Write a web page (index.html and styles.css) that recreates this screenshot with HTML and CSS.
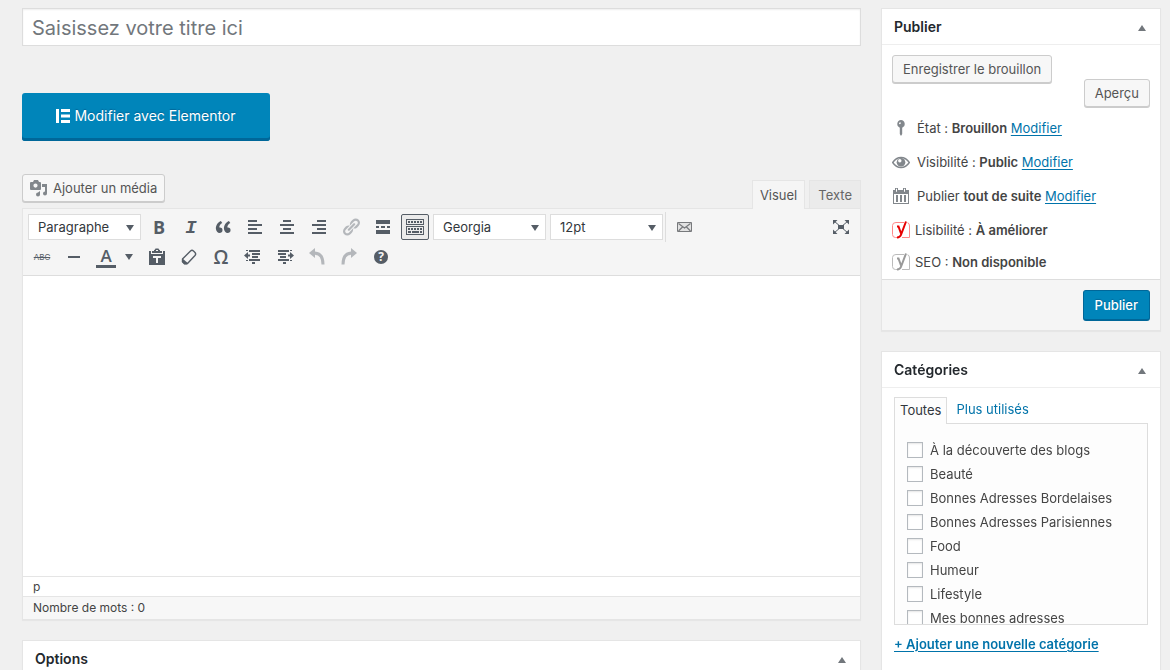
FILE: index.html
```html
<!DOCTYPE html>
<html lang="fr">
<head>
<meta charset="utf-8">
<meta name="viewport" content="width=device-width, initial-scale=1">
<title>Ajouter un article</title>
<link rel="stylesheet" href="styles.css">
</head>
<body>
<div class="layout">
  <main class="main">
    <input class="title-input" type="text" aria-label="Titre" placeholder="Saisissez votre titre ici">
    <button class="btn-elementor" type="button">
      <svg width="14" height="14" viewBox="0 0 14 14" aria-hidden="true"><path fill="#fff" d="M0 0h3v14H0zM5 0h9v3H5zM5 5.500h9v3H5zM5 11h9v3H5z"/></svg>
      Modifier avec Elementor
    </button>

    <div class="editor-tools">
      <button class="btn media-btn" type="button">
        <svg width="18" height="18" viewBox="0 0 18 18" aria-hidden="true"><path fill="#82878c" fill-rule="evenodd" d="M1 3h2l1-2h4l1 2h1q1 0 1 1v6q0 1-1 1H1q-1 0-1-1V4q0-1 1-1zm4.500 1.500a2.100 2.100 0 1 0 0 4.200a2.100 2.100 0 1 0 0-4.200z"/><path fill="#82878c" d="M12 5h5v9.500a2 2 0 1 1-2-2V8h-3zM10 12v3.500a2 2 0 1 1-2-2z"/></svg>
        Ajouter un média
      </button>
      <div class="editor-tabs">
        <button class="editor-tab active" type="button">Visuel</button>
        <button class="editor-tab" type="button">Texte</button>
      </div>
    </div>

    <section class="editor">
      <div class="toolbar">
        <div class="tool-row">
          <span class="select"><select aria-label="Format"><option>Paragraphe</option></select></span>
          <button class="tool glyph bold" type="button" aria-label="Gras">B</button>
          <button class="tool glyph italic" type="button" aria-label="Italique">I</button>
          <button class="tool" type="button" aria-label="Citation"><svg viewBox="0 0 20 20"><path d="M9.490 13.220c0-.74-.2-1.380-.61-1.900-.62-.78-1.830-.88-2.530-.72-.29-1.650 1.110-3.750 2.920-4.650L7.880 4c-2.730 1.300-5.420 4.280-4.960 8.050C3.210 14.430 4.590 16 6.540 16c.85 0 1.560-.25 2.120-.75s.83-1.180.83-2.030zm8.050 0c0-.74-.2-1.380-.61-1.900-.63-.78-1.830-.88-2.530-.72-.29-1.650 1.110-3.750 2.920-4.650L15.930 4c-2.730 1.300-5.410 4.280-4.950 8.050.29 2.380 1.660 3.950 3.610 3.950.85 0 1.560-.25 2.120-.75s.83-1.180.83-2.030z"/></svg></button>
          <button class="tool" type="button" aria-label="Aligner à gauche"><svg viewBox="0 0 20 20"><path d="M3 3h9v2H3zM3 7h14v2H3zM3 11h9v2H3zM3 15h14v2H3z"/></svg></button>
          <button class="tool" type="button" aria-label="Centrer"><svg viewBox="0 0 20 20"><path d="M6 3h8v2H6zM3 7h14v2H3zM6 11h8v2H6zM3 15h14v2H3z"/></svg></button>
          <button class="tool" type="button" aria-label="Aligner à droite"><svg viewBox="0 0 20 20"><path d="M8 3h9v2H8zM3 7h14v2H3zM8 11h9v2H8zM3 15h14v2H3z"/></svg></button>
          <button class="tool" type="button" aria-label="Lien" disabled><svg viewBox="0 0 20 20"><path d="M17.740 2.760c1.680 1.690 1.680 4.410 0 6.100l-1.530 1.520c-1.120 1.120-2.700 1.470-4.140 1.090l2.620-2.610.76-.77.76-.76c.84-.84.84-2.200 0-3.040-.84-.85-2.200-.85-3.040 0l-.77.76-3.380 3.380c-.37-1.440-.02-3.020 1.100-4.140l1.520-1.530c1.690-1.680 4.420-1.680 6.100 0zM8.590 13.430l5.340-5.340c.42-.42.42-1.100 0-1.520-.44-.43-1.130-.39-1.530 0l-5.330 5.340c-.42.42-.42 1.100 0 1.520.44.43 1.130.39 1.520 0zm-.76 2.290l4.140-4.150c.38 1.440.03 3.020-1.090 4.140l-1.520 1.530c-1.690 1.680-4.410 1.680-6.100 0-1.680-1.680-1.680-4.420 0-6.100l1.530-1.520c1.120-1.120 2.700-1.470 4.140-1.100l-4.140 4.150c-.85.84-.85 2.200 0 3.050.84.84 2.200.84 3.040 0z"/></svg></button>
          <button class="tool" type="button" aria-label="Lire la suite"><svg viewBox="0 0 20 20"><path d="M3 3h14v4H3zM3 9h3v2H3zM8 9h4v2H8zM14 9h3v2h-3zM3 13h14v4H3z"/></svg></button>
          <button class="tool pressed" type="button" aria-label="Plus d’outils" aria-pressed="true"><svg viewBox="0 0 20 20"><path fill-rule="evenodd" d="M1 2h18v6H1zm1 1v4h16V3zM1 9h18v9H1zm1 1v7h16v-7z"/><path d="M3 4h2v2H3zM6 4h2v2H6zM9 4h2v2H9zM12 4h2v2h-2zM15 4h2v2h-2zM3 11h2v2H3zM6 11h2v2H6zM9 11h2v2H9zM12 11h2v2h-2zM15 11h2v2h-2zM3 14h3v2H3zM7 14h7v2H7zM15 14h2v2h-2z"/></svg></button>
          <span class="select"><select aria-label="Police"><option>Georgia</option></select></span>
          <span class="select"><select aria-label="Taille"><option>12pt</option></select></span>
          <span class="separator"></span>
          <button class="tool" type="button" aria-label="Enveloppe"><svg viewBox="0 0 20 20"><path fill="#e2e2e2" stroke="#77797c" d="M2.500 5.500h14v9h-14z"/><path fill="none" stroke="#77797c" stroke-width="1.200" d="M3.500 6.500l6 4.500 6-4.500M3.500 14l4-4M15.500 14l-4-4"/></svg></button>
          <button class="tool fullscreen" type="button" aria-label="Plein écran"><svg viewBox="0 0 20 20"><path d="M7 8h6v4H7zM2 3h4.500L2 7.500zM18 3v4.500L13.500 3zM2 17v-4.500L6.500 17zM18 17h-4.500l4.500-4.500z"/><path fill="none" stroke="#555d66" d="M3 4l14 12M17 4L3 16"/></svg></button>
        </div>
        <div class="tool-row">
          <button class="tool glyph strike" type="button" aria-label="Barré">ABC</button>
          <button class="tool" type="button" aria-label="Ligne horizontale"><svg viewBox="0 0 20 20"><path d="M4 9h12v2H4z"/></svg></button>
          <span class="split"><button class="tool glyph color" type="button" aria-label="Couleur du texte">A</button><button class="tool caret" type="button" aria-label="Choisir une couleur"></button></span>
          <button class="tool" type="button" aria-label="Coller en texte"><svg viewBox="0 0 20 20"><path fill-rule="evenodd" d="M5 4h2V3q1 0 1.500-1.500h3Q12 3 13 3v1h2v2H5zM2 4h2v3h12V4h2v14H2zm4 5v2h3v5h2v-5h3V9zM9 3v1h2V3z"/></svg></button>
          <button class="tool" type="button" aria-label="Supprimer la mise en forme"><svg viewBox="0 0 20 20"><path fill="none" stroke="#555d66" stroke-width="1.400" stroke-linejoin="round" d="M3.500 12l8-8Q13 2.700 14.500 4l1.500 1.500q1.300 1.500 0 3L8.500 16.500H5.500l-2-2z"/><path d="M3.500 11.500L9 16.300 8 17.500H5.200L2.800 15z"/></svg></button>
          <button class="tool glyph omega" type="button" aria-label="Caractère spécial">Ω</button>
          <button class="tool" type="button" aria-label="Diminuer le retrait"><svg viewBox="0 0 20 20"><path d="M1 8.500L5 5v2.500h2v2H5V12zM3 3h2v1H3zM6 3h11v2H6zM9 6h8v2H9zM9 9h6v2H9zM3 13h2v1H3zM6 12h11v2H6zM9 15h3v2H9z"/></svg></button>
          <button class="tool" type="button" aria-label="Augmenter le retrait"><svg viewBox="0 0 20 20"><path d="M19 8.500L15 5v2.500h-2v2h2V12zM15 3h2v1h-2zM3 3h11v2H3zM3 6h8v2H3zM5 9h6v2H5zM15 13h2v1h-2zM3 12h11v2H3zM8 15h3v2H8z"/></svg></button>
          <button class="tool" type="button" aria-label="Annuler" disabled><svg viewBox="0 0 20 20"><path d="M2 6l6-5v3.500q9.500.5 9.500 13h-3q0-9.500-6.500-9.800V11z"/></svg></button>
          <button class="tool" type="button" aria-label="Rétablir" disabled><svg viewBox="0 0 20 20"><path d="M18 6l-6-5v3.500q-9.500.5-9.500 13h3q0-9.500 6.500-9.800V11z"/></svg></button>
          <button class="tool" type="button" aria-label="Aide"><span class="help">?</span></button>
        </div>
      </div>
      <div class="canvas" contenteditable="true" role="textbox" aria-label="Contenu de l’article"></div>
      <div class="path-bar">p</div>
      <div class="word-bar">Nombre de mots : 0</div>
    </section>

    <section class="box">
      <header class="box-head options"><h2>Options</h2><button class="toggle" type="button" aria-label="Replier Options"></button></header>
    </section>
  </main>

  <aside class="side">
    <section class="box">
      <header class="box-head"><h2>Publier</h2><button class="toggle" type="button" aria-label="Replier Publier"></button></header>
      <div class="draft-row">
        <button class="btn" type="button">Enregistrer le brouillon</button>
        <button class="btn preview" type="button">Aperçu</button>
      </div>
      <div class="status">
        <svg class="status-icon" viewBox="0 0 18 18" aria-hidden="true"><path fill="#82878c" fill-rule="evenodd" d="M9 1a4 4 0 0 1 1.200 7.700V15L9 17l-1.200-2V8.700A4 4 0 0 1 9 1zM7 4.500q0 .8.800.8t1-1q.2-1-.8-1-1 .2-1 1.200z"/></svg>
        <span>État : <b>Brouillon</b> <a href="#">Modifier</a></span>
      </div>
      <div class="status">
        <svg class="status-icon" viewBox="0 0 18 18" aria-hidden="true"><path fill="none" stroke="#82878c" stroke-width="1.400" d="M.7 9.500Q4 4.500 9 4.500t8.300 5Q14 14.500 9 14.500t-8.300-5z"/><circle cx="9" cy="9.200" r="4.300" fill="#82878c"/><circle cx="7.800" cy="7.700" r="1.700" fill="#fff"/></svg>
        <span>Visibilité : <b>Public</b> <a href="#">Modifier</a></span>
      </div>
      <div class="status">
        <svg class="status-icon" viewBox="0 0 18 18" aria-hidden="true"><path fill="#82878c" fill-rule="evenodd" d="M1 3h2V1h3v2h5V1h3v2h3v14H1zm1 4v9h14V7zM4 1.800v3h1v-3zM12 1.800v3h1v-3zM4 8h2v7H4zM8 8h2v7H8zM12 8h2v7h-2z"/></svg>
        <span>Publier <b>tout de suite</b> <a href="#">Modifier</a></span>
      </div>
      <div class="status yoast">
        <svg class="status-icon bad" viewBox="0 0 18 18" aria-hidden="true"><path class="frame" d="M12 1.500H4Q.5 1.500.5 4.500v9q0 3 3 3H5M10 16.500h7.500V5q0-3-2-3.300"/><path class="mark" d="M5 5.500h1.500l2.500 7M14 .5L9.500 12.500Q8.300 16.500 5 16.500"/></svg>
        <span>Lisibilité : <b>À améliorer</b></span>
      </div>
      <div class="status yoast last">
        <svg class="status-icon na" viewBox="0 0 18 18" aria-hidden="true"><path class="frame" d="M12 1.500H4Q.5 1.500.5 4.500v9q0 3 3 3H5M10 16.500h7.500V5q0-3-2-3.300"/><path class="mark" d="M5 5.500h1.500l2.500 7M14 .5L9.500 12.500Q8.300 16.500 5 16.500"/></svg>
        <span>SEO : <b>Non disponible</b></span>
      </div>
      <footer class="publish-row"><button class="btn-primary" type="button">Publier</button></footer>
    </section>

    <section class="box">
      <header class="box-head"><h2>Catégories</h2><button class="toggle" type="button" aria-label="Replier Catégories"></button></header>
      <div class="cats">
        <div class="cat-tabs"><button class="cat-tab active" type="button">Toutes</button><a class="cat-tab" href="#">Plus utilisés</a></div>
        <div class="cat-panel">
          <label><input type="checkbox">À la découverte des blogs</label>
          <label><input type="checkbox">Beauté</label>
          <label><input type="checkbox">Bonnes Adresses Bordelaises</label>
          <label><input type="checkbox">Bonnes Adresses Parisiennes</label>
          <label><input type="checkbox">Food</label>
          <label><input type="checkbox">Humeur</label>
          <label><input type="checkbox">Lifestyle</label>
          <label><input type="checkbox">Mes bonnes adresses</label>
        </div>
        <a class="add-cat" href="#">+ Ajouter une nouvelle catégorie</a>
      </div>
    </section>
  </aside>
</div>
</body>
</html>
```
FILE: styles.css
```css
* { box-sizing: border-box; }

body {
  margin: 0;
  height: 100vh;
  overflow: hidden;
  background: #f0f0f0;
  color: #444;
  font: 13px/20px Inter, "Liberation Sans", sans-serif;
}

button, input, select { font: inherit; color: inherit; margin: 0; }
button { cursor: pointer; padding: 0; border: 0; background: none; }
a { color: #0073aa; text-underline-offset: 2px; }
b { font-weight: 600; }

.layout {
  display: grid;
  grid-template-columns: minmax(0, 1fr) 280px;
  gap: 20px;
  padding: 8px 9px 0 22px;
}

/* Main column */
.main { display: flex; flex-direction: column; }

.title-input {
  width: 100%;
  height: 38px;
  padding: 2px 9px 0;
  border: 1px solid #ddd;
  background: #fff;
  box-shadow: inset 0 1px 2px rgba(0, 0, 0, .07);
  color: #32373c;
  font-size: 20px;
}
.title-input::placeholder { color: #72777c; opacity: 1; }

.btn-elementor {
  display: flex;
  align-items: center;
  justify-content: center;
  gap: 4px;
  align-self: flex-start;
  width: 248px;
  height: 48px;
  margin-top: 47px;
  padding-bottom: 2px;
  border-radius: 3px;
  background: #0085ba;
  box-shadow: inset 0 -3px #006799;
  color: #fff;
  font-size: 14px;
  text-shadow: 0 -1px 1px #006799;
}

.editor-tools {
  display: flex;
  justify-content: space-between;
  align-items: flex-start;
  margin-top: 33px;
}

.btn {
  height: 28px;
  padding: 0 10px;
  border: 1px solid #ccc;
  border-radius: 3px;
  background: #f7f7f7;
  box-shadow: 0 1px 0 #ccc;
  color: #555;
  white-space: nowrap;
}
.media-btn { display: flex; align-items: center; gap: 5px; padding: 0 7px; }

.editor-tabs { display: flex; gap: 4px; margin-top: 6px; }
.editor-tab {
  height: 28px;
  padding: 0 8px;
  border: 1px solid #e5e5e5;
  border-bottom: 0;
  background: #ebebeb;
  color: #666;
}
.editor-tab.active {
  position: relative;
  height: 29px;
  margin-bottom: -1px;
  padding: 0 7px;
  background: #f5f5f5;
  color: #555;
}

.editor { border: 1px solid #e5e5e5; box-shadow: 0 1px 1px rgba(0, 0, 0, .04); }

.toolbar {
  display: flex;
  flex-direction: column;
  gap: 4px;
  padding: 5px;
  border-bottom: 1px solid #ddd;
  background: #f5f5f5;
}
.tool-row { display: flex; align-items: center; gap: 4px; height: 26px; }

.tool {
  display: flex;
  flex: none;
  align-items: center;
  justify-content: center;
  width: 28px;
  height: 26px;
  border-radius: 2px;
  color: #555d66;
}
.tool svg { width: 20px; height: 20px; fill: #555d66; }
.tool:disabled { opacity: .4; }
.tool.pressed { border: 1px solid #555d66; background: #ebebeb; }
.fullscreen { margin-left: auto; }

.bold { font: 700 18px "Open Sans", sans-serif; }
.italic { padding-top: 2px; font: italic 700 19px "Liberation Mono", monospace; }
.strike { font-size: 8px; text-decoration: line-through; }
.omega { font: 600 19px "Open Sans", sans-serif; }
.color {
  height: 22px;
  width: 20px;
  margin: 0 4px;
  border-bottom: 3px solid #555d66;
  border-radius: 0;
  font: 600 17px/17px "Open Sans", sans-serif;
}
.split { display: flex; align-items: center; width: 47px; }
.caret { width: 17px; }
.caret::before, .select::after {
  content: "";
  border: 4px solid transparent;
  border-top: 6px solid #555d66;
  border-bottom: 0;
}
.help {
  width: 14px;
  height: 14px;
  border-radius: 50%;
  background: #555d66;
  color: #f5f5f5;
  font: 700 12px/14px "Open Sans", sans-serif;
}

.select { position: relative; flex: none; width: 113px; }
.select select {
  display: block;
  appearance: none;
  width: 100%;
  height: 26px;
  padding: 0 9px;
  border: 1px solid #ddd;
  border-radius: 0;
  background: #fff;
  color: #32373c;
}
.select::after { position: absolute; right: 7px; top: 11px; pointer-events: none; }
.separator { width: 1px; height: 30px; margin: 0 1px 0 -2px; background: #ddd; }

.canvas { height: 300px; background: #fff; outline: 0; }
.path-bar, .word-bar { padding: 0 10px; border-top: 1px solid #e5e5e5; font-size: 12px; }
.path-bar { height: 20px; background: #fff; }
.word-bar { height: 23px; background: #f7f7f7; line-height: 22px; }

/* Boxes */
.box {
  border: 1px solid #e5e5e5;
  background: #fff;
  box-shadow: 0 1px 1px rgba(0, 0, 0, .04);
}
.main .box { margin-top: 20px; }

.box-head {
  display: flex;
  align-items: center;
  justify-content: space-between;
  height: 36px;
  padding: 0 12px;
  border-bottom: 1px solid #eee;
}
.box-head h2 { margin: 0; color: #23282d; font-size: 14px; font-weight: 600; }
.toggle { display: flex; justify-content: center; width: 12px; padding: 9px 0 7px; }
.toggle::before {
  content: "";
  border: 4px solid transparent;
  border-top: 0;
  border-bottom: 6px solid #72777c;
}

/* Sidebar */
.side { display: flex; flex-direction: column; gap: 20px; }

.draft-row {
  display: flex;
  justify-content: space-between;
  align-items: flex-start;
  padding: 10px 10px 4px;
}
.preview { margin-top: 24px; }

.status {
  display: flex;
  align-items: center;
  gap: 7px;
  height: 34px;
  padding: 0 10px;
}
.status-icon { flex: none; width: 18px; height: 18px; }
.yoast { gap: 5px; }
.yoast.last { height: 30px; margin-bottom: 2px; }
.frame, .mark { fill: none; }
.mark { stroke-width: 2; }
.bad .frame { stroke: #f88; }
.bad .mark { stroke: #e60000; }
.na .frame { stroke: #bbb; }
.na .mark { stroke: #999; }

.publish-row {
  display: flex;
  justify-content: flex-end;
  padding: 10px 10px 9px;
  border-top: 1px solid #ddd;
  background: #f5f5f5;
}
.btn-primary {
  height: 31px;
  padding: 0 11px;
  border: 1px solid #006799;
  border-bottom-width: 2px;
  border-radius: 3px;
  background: #0085ba;
  color: #fff;
  font-weight: 500;
  text-shadow: 0 -1px 1px #006799;
}

.cats { padding: 9px 12px 20px; }
.cat-tabs { display: flex; }
.cat-tab {
  height: 27px;
  padding: 0 9px;
  line-height: 25px;
  text-decoration: none;
}
.cat-tab.active {
  position: relative;
  padding: 0 5px 2px;
  border: 1px solid #ddd;
  border-bottom: 0;
  background: #fdfdfd;
  color: #32373c;
}
.cat-panel {
  height: 202px;
  margin-top: -1px;
  padding: 14px 12px;
  overflow-y: auto;
  scrollbar-width: none;
  border: 1px solid #ddd;
  background: #fdfdfd;
}
.cat-panel label { display: flex; align-items: center; gap: 7px; height: 24px; }
.cat-panel input {
  appearance: none;
  flex: none;
  width: 16px;
  height: 16px;
  border: 1px solid #b4b9be;
  background: #fff;
  box-shadow: inset 0 1px 2px rgba(0, 0, 0, .1);
}
.cat-panel input:checked { background: #0085ba; }
.add-cat { display: block; margin-top: 9px; font-weight: 600; }
```
